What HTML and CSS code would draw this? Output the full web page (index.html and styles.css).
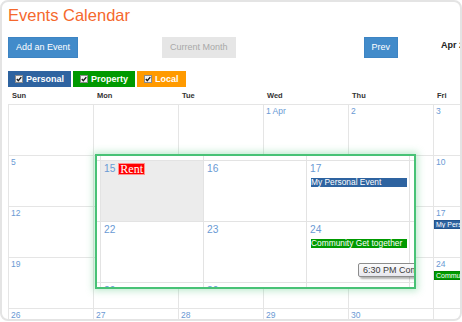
FILE: index.html
```html
<!DOCTYPE html>
<html lang="en">
<head>
    <meta charset="UTF-8">
    <meta name="viewport" content="width=device-width, initial-scale=1.0">
    <title>Events Calendar</title>
    <link rel="stylesheet" href="styles.css">
</head>
<body>
    <div class="page">
        <h1 class="title">Events Calendar</h1>

        <div class="toolbar">
            <button class="btn btn-primary">Add an Event</button>
            <button class="btn btn-muted btn-current">Current Month</button>
            <button class="btn btn-primary btn-prev">Prev</button>
            <span class="month-label">Apr 2015</span>
        </div>

        <div class="legend">
            <label class="tag tag-personal">
                <svg class="check" width="8" height="8" viewBox="0 0 8 8"><rect x="0.5" y="0.5" width="7" height="7" fill="#f2f2f2" stroke="#8a8a8a"/><path d="M1.8 4.1 L3.3 5.7 L6.3 2.1" fill="none" stroke="#1a1a1a" stroke-width="1.4"/></svg>
                Personal
            </label>
            <label class="tag tag-property">
                <svg class="check" width="8" height="8" viewBox="0 0 8 8"><rect x="0.5" y="0.5" width="7" height="7" fill="#f2f2f2" stroke="#8a8a8a"/><path d="M1.8 4.1 L3.3 5.7 L6.3 2.1" fill="none" stroke="#1a1a1a" stroke-width="1.4"/></svg>
                Property
            </label>
            <label class="tag tag-local">
                <svg class="check" width="8" height="8" viewBox="0 0 8 8"><rect x="0.5" y="0.5" width="7" height="7" fill="#f2f2f2" stroke="#8a8a8a"/><path d="M1.8 4.1 L3.3 5.7 L6.3 2.1" fill="none" stroke="#1a1a1a" stroke-width="1.4"/></svg>
                Local
            </label>
        </div>

        <div class="weekdays">
            <span>Sun</span><span>Mon</span><span>Tue</span><span>Wed</span><span>Thu</span><span>Fri</span><span>Sat</span>
        </div>

        <div class="month">
            <!-- week 1 -->
            <div class="day"></div>
            <div class="day"></div>
            <div class="day"></div>
            <div class="day"><span class="day-num">1 Apr</span></div>
            <div class="day"><span class="day-num">2</span></div>
            <div class="day"><span class="day-num">3</span></div>
            <div class="day"><span class="day-num">4</span></div>
            <!-- week 2 -->
            <div class="day"><span class="day-num">5</span></div>
            <div class="day"><span class="day-num">6</span></div>
            <div class="day"><span class="day-num">7</span></div>
            <div class="day"><span class="day-num">8</span></div>
            <div class="day"><span class="day-num">9</span></div>
            <div class="day"><span class="day-num">10</span></div>
            <div class="day"><span class="day-num">11</span></div>
            <!-- week 3 -->
            <div class="day"><span class="day-num">12</span></div>
            <div class="day"><span class="day-num">13</span></div>
            <div class="day"><span class="day-num">14</span></div>
            <div class="day"><span class="day-num">15</span></div>
            <div class="day"><span class="day-num">16</span></div>
            <div class="day"><span class="day-num">17</span><div class="event event-personal">My Personal Event</div></div>
            <div class="day"><span class="day-num">18</span></div>
            <!-- week 4 -->
            <div class="day"><span class="day-num">19</span></div>
            <div class="day"><span class="day-num">20</span></div>
            <div class="day"><span class="day-num">21</span></div>
            <div class="day"><span class="day-num">22</span></div>
            <div class="day"><span class="day-num">23</span></div>
            <div class="day"><span class="day-num">24</span><div class="event event-local">Community Get together</div></div>
            <div class="day"><span class="day-num">25</span></div>
            <!-- week 5 -->
            <div class="day"><span class="day-num">26</span></div>
            <div class="day"><span class="day-num">27</span></div>
            <div class="day"><span class="day-num">28</span></div>
            <div class="day"><span class="day-num">29</span></div>
            <div class="day"><span class="day-num">30</span></div>
            <div class="day"></div>
            <div class="day"></div>
        </div>

        <!-- zoomed week view laid over the month -->
        <div class="magnifier">
            <div class="mag-grid">
                <div class="mag-cell"></div><div class="mag-cell"></div><div class="mag-cell"></div><div class="mag-cell"></div><div class="mag-cell"></div>

                <div class="mag-cell"></div>
                <div class="mag-cell today">
                    <div class="mag-head"><span class="mag-num">15</span><span class="rent">Rent</span></div>
                </div>
                <div class="mag-cell">
                    <div class="mag-head"><span class="mag-num">16</span></div>
                </div>
                <div class="mag-cell">
                    <div class="mag-head"><span class="mag-num">17</span></div>
                    <div class="mag-event event-personal">My Personal Event</div>
                </div>
                <div class="mag-cell"></div>

                <div class="mag-cell"></div>
                <div class="mag-cell">
                    <div class="mag-head"><span class="mag-num">22</span></div>
                </div>
                <div class="mag-cell">
                    <div class="mag-head"><span class="mag-num">23</span></div>
                </div>
                <div class="mag-cell">
                    <div class="mag-head"><span class="mag-num">24</span></div>
                    <div class="mag-event event-local">Community Get together</div>
                </div>
                <div class="mag-cell"></div>

                <div class="mag-cell"></div>
                <div class="mag-cell"><div class="mag-head"><span class="mag-num">29</span></div></div>
                <div class="mag-cell"><div class="mag-head"><span class="mag-num">30</span></div></div>
                <div class="mag-cell"></div>
                <div class="mag-cell"></div>
            </div>
            <div class="tooltip">6:30 PM Community Get together</div>
        </div>
    </div>
</body>
</html>
```

FILE: styles.css
```css
body {
    margin: 0;
    font-family: "Liberation Sans", Arial, sans-serif;
    background-color: #ffffff;
}
.page {
    position: relative;
    box-sizing: border-box;
    width: 462px;
    height: 321px;
    padding-left: 6px;
    border: 2px solid #e4e4e4;
    border-radius: 8px;
    overflow: hidden;
}
.title {
    margin: 0;
    padding-top: 4px;
    font-size: 16.5px;
    line-height: 19px;
    font-weight: normal;
    color: #f5682d;
}

/* toolbar */
.toolbar {
    display: flex;
    align-items: center;
    margin-top: 12px;
    height: 21px;
}
.btn {
    flex-shrink: 0;
    font-family: "Liberation Sans", Arial, sans-serif;
    font-size: 9px;
    line-height: 11px;
    padding: 4px 7px;
    border: 1px solid transparent;
    border-radius: 0;
}
.btn-primary {
    background-color: #428bca;
    border-color: #3d84c3;
    color: #ffffff;
}
.btn-muted {
    background-color: #e6e6e6;
    border-color: #e6e6e6;
    color: #a9a9a9;
}
.btn-current {
    margin-left: 84px;
}
.btn-prev {
    margin-left: 128px;
}
.month-label {
    flex-shrink: 0;
    margin-left: 43px;
    margin-bottom: 6px;
    font-size: 9px;
    font-weight: bold;
    color: #222222;
    white-space: nowrap;
}

/* legend */
.legend {
    display: flex;
    gap: 2px;
    margin-top: 13px;
}
.tag {
    display: flex;
    align-items: center;
    gap: 3px;
    height: 16px;
    padding: 0 7px;
    color: #ffffff;
    font-size: 9px;
    font-weight: bold;
}
.check {
    flex-shrink: 0;
}
.tag-personal { background-color: #2e63a0; }
.tag-property { background-color: #009900; }
.tag-local { background-color: #ff9a00; }

/* month grid */
.weekdays {
    display: grid;
    grid-template-columns: repeat(7, 84px);
    column-gap: 1px;
    width: max-content;
    padding: 4px 0 4px 1px;
    font-size: 7.5px;
    line-height: 9px;
    font-weight: bold;
    color: #333333;
}
.weekdays span {
    padding-left: 3px;
}
.month {
    display: grid;
    grid-template-columns: repeat(7, 84px);
    grid-auto-rows: 50px;
    gap: 1px;
    width: max-content;
    background-color: #e5e5e5;
    border: 1px solid #e5e5e5;
}
.day {
    background-color: #ffffff;
    overflow: hidden;
}
.day-num {
    display: block;
    padding: 1px 2px 0;
    font-size: 8.5px;
    line-height: 10px;
    color: #6a9ad4;
}
.event {
    margin-top: 2px;
    padding-left: 1px;
    font-size: 7px;
    line-height: 7px;
    color: #ffffff;
    white-space: nowrap;
    overflow: hidden;
    border: 1px solid;
}
.event-personal {
    background-color: #2e63a0;
    border-color: #24538c;
}
.event-local {
    background-color: #009a00;
    border-color: #008400;
}

/* magnified view */
.magnifier {
    position: absolute;
    left: 93px;
    top: 152px;
    box-sizing: border-box;
    width: 321px;
    height: 135px;
    border: 2px solid #48c276;
    box-shadow: 0 0 7px 2px rgba(72, 194, 118, 0.35);
    background-color: #ffffff;
    overflow: hidden;
}
.mag-grid {
    display: grid;
    grid-template-columns: 3px repeat(3, 102px) 20px;
    grid-template-rows: 4px 60px 60px 20px;
    gap: 1px;
    width: max-content;
    background-color: #e3e3e3;
}
.mag-cell {
    background-color: #ffffff;
    overflow: hidden;
}
.mag-cell.today {
    background-color: #ececec;
}
.mag-head {
    display: flex;
    align-items: center;
    gap: 3px;
    padding: 2px 3px 0;
}
.mag-num {
    font-size: 10.2px;
    line-height: 12px;
    color: #6a9ad4;
}
.rent {
    padding: 0 1px;
    font-family: "Liberation Serif", "Times New Roman", serif;
    font-size: 12px;
    line-height: 10px;
    color: #ffffff;
    background-color: #ff0000;
    border: 1px solid #ff9090;
}
.mag-event {
    margin: 2px 1px 0 3px;
    font-size: 8.4px;
    line-height: 9px;
    color: #ffffff;
    white-space: nowrap;
    overflow: hidden;
    border: 1px solid;
}
.tooltip {
    position: absolute;
    left: 261px;
    top: 107px;
    padding: 0 4px 0 4px;
    font-size: 9px;
    line-height: 12px;
    color: #3c3c3c;
    white-space: nowrap;
    background: linear-gradient(#fbfbfb, #e7e7ee);
    border: 1px solid #8c8c8c;
    border-radius: 2px;
    box-shadow: 2px 2px 2px rgba(0, 0, 0, 0.3);
}
```
